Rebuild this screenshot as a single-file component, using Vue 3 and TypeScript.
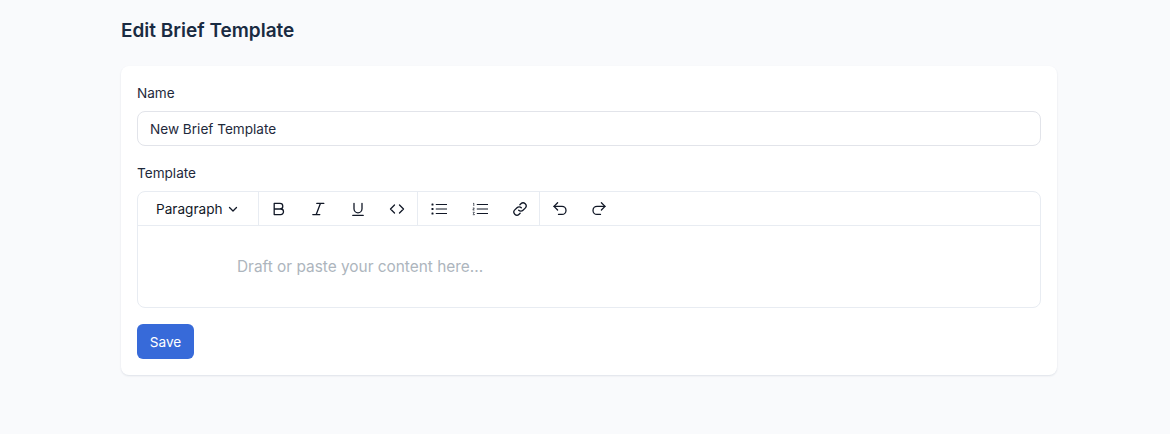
<script setup lang="ts">
const name = 'New Brief Template'
</script>

<template>
  <div class="page">
    <h1 class="title">Edit Brief Template</h1>
    <div class="card">
      <label class="label">Name</label>
      <div class="input">{{ name }}</div>
      <label class="label second">Template</label>
      <div class="editor">
        <div class="toolbar">
          <div class="group para">
            <span>Paragraph</span>
            <svg width="12" height="12" viewBox="0 0 12 12" fill="none" stroke="currentColor" stroke-width="1.3" stroke-linecap="round" stroke-linejoin="round"><path d="M2.5 4.500 6 8l3.500-3.500"/></svg>
          </div>
          <div class="group g1">
            <button class="tb"><svg width="16" height="16" viewBox="0 0 16 16" fill="none" stroke="currentColor" stroke-width="1.3" stroke-linecap="round" stroke-linejoin="round"><path d="M3.200 2.400h5.800a2.800 2.800 0 0 1 0 5.600H3.200zM3.200 8h6.500a2.800 2.800 0 0 1 0 5.600H3.200z"/></svg></button>
            <button class="tb"><svg width="16" height="16" viewBox="0 0 16 16" fill="none" stroke="currentColor" stroke-width="1.3" stroke-linecap="round" stroke-linejoin="round"><path d="M6.800 2.400H13.800M2.800 13.600H9.800M10.400 2.400 6.200 13.600"/></svg></button>
            <button class="tb"><svg width="16" height="16" viewBox="0 0 16 16" fill="none" stroke="currentColor" stroke-width="1.3" stroke-linecap="round" stroke-linejoin="round"><path d="M4 2.300V7.800a4 4 0 0 0 8 0V2.300M2.800 14.400H13.200"/></svg></button>
            <button class="tb"><svg width="16" height="16" viewBox="0 0 16 16" fill="none" stroke="currentColor" stroke-width="1.300" stroke-linecap="round" stroke-linejoin="round"><path d="M5.500 4 1.500 8l4 4M10.500 4l4 4-4 4"/></svg></button>
          </div>
          <div class="group g2">
            <button class="tb list"><svg width="16" height="16" viewBox="0 0 16 16" fill="none" stroke="currentColor" stroke-width="1.200" stroke-linecap="butt"><path d="M4.800 3.500H16M4.800 8H16M4.800 12.500H16"/><g fill="currentColor" stroke="none"><rect x="0.500" y="2.500" width="2" height="2" rx=".6"/><rect x="0.500" y="7" width="2" height="2" rx=".6"/><rect x="0.500" y="11.500" width="2" height="2" rx=".6"/></g></svg></button>
            <button class="tb"><svg width="16" height="16" viewBox="0 0 16 16" fill="none" stroke="currentColor" stroke-width="1.200" stroke-linecap="butt"><path d="M4.800 3.500H16M4.800 8H16M4.800 12.500H16"/><path stroke-width=".7" d="M1 2.700 1.800 2.200v2.800M.8 7h1.500L.8 9h1.700M.8 11.300h1.600L1.500 12.500 2.500 13.700H.8"/></svg></button>
            <button class="tb"><svg width="16" height="16" viewBox="0 0 16 16" fill="none" stroke="currentColor" stroke-width="1.300" stroke-linecap="round" stroke-linejoin="round"><path d="M6.700 9.300a3 3 0 0 0 4.300 0l2.200-2.200a3 3 0 0 0-4.300-4.300l-1 1"/><path d="M9.300 6.700a3 3 0 0 0-4.300 0L2.800 8.900a3 3 0 0 0 4.300 4.300l1-1"/></svg></button>
          </div>
          <div class="group g3">
            <button class="tb"><svg width="16" height="16" viewBox="0 0 16 16" fill="none" stroke="currentColor" stroke-width="1.300" stroke-linecap="round" stroke-linejoin="round"><path d="M5.600 1.800 2 5.400 5.600 9"/><path d="M2 5.400H10a4 4 0 0 1 0 8H6.500"/></svg></button>
            <button class="tb"><svg width="16" height="16" viewBox="0 0 16 16" fill="none" stroke="currentColor" stroke-width="1.300" stroke-linecap="round" stroke-linejoin="round"><path d="M10.400 1.800 14 5.400 10.400 9"/><path d="M14 5.400H6a4 4 0 0 0 0 8h3.500"/></svg></button>
          </div>
        </div>
        <div class="body"><span class="placeholder">Draft or paste your content here...</span></div>
      </div>
      <button class="save">Save</button>
    </div>
  </div>
</template>

<style>
html, body { margin: 0; background: #f9fafc; }
</style>

<style scoped>
.page {
  width: 936px;
  margin: 0 0 0 121px;
  padding: 19px 0 58px;
  font-family: Inter, "Liberation Sans", sans-serif;
  color: #1e293b;
}
.title {
  margin: 0 0 23px;
  font-size: 19px;
  line-height: 24px;
  font-weight: 600;
  color: #1a2b42;
}
.card {
  display: flex;
  flex-direction: column;
  align-items: stretch;
  background: #fff;
  border-radius: 8px;
  padding: 17px 16px 16px;
  box-shadow: 0 1px 2px rgba(30, 50, 90, 0.12);
}
.label {
  font-size: 13.6px;
  line-height: 20px;
  margin-bottom: 8px;
  color: #1e293b;
}
.label.second { margin-top: 17px; margin-bottom: 8px; }
.input {
  height: 33px;
  border: 1px solid #e2e4ea;
  border-radius: 8px;
  padding: 0 12px;
  font-size: 13.6px;
  line-height: 34px;
  color: #1e293b;
}
.editor {
  border: 1px solid #e8ecf2;
  border-radius: 8px;
}
.toolbar {
  display: flex;
  height: 33px;
  border-bottom: 1px solid #e8ecf2;
}
.group {
  display: flex;
  align-items: center;
  border-right: 1px solid #e8ecf2;
  padding: 0 0 0 1px;
  box-sizing: border-box;
}
.group:last-child { border-right: none; }
.para {
  width: 121px;
  padding: 0 0 0 18px;
  gap: 4px;
  font-size: 13.6px;
  color: #111827;
}
.tb {
  flex: none;
  width: 39.5px;
  height: 33px;
  padding: 0;
  border: none;
  background: none;
  color: #111827;
  display: flex;
  align-items: center;
  justify-content: center;
}
.g1 { width: 159px; padding-left: 0; }
.g2 { width: 122px; }
.g3 { padding-left: 0; }
.list { margin-right: 2px; }
.body {
  height: 81px;
  padding: 31px 0 0 99px;
  box-sizing: border-box;
}
.placeholder {
  font-size: 15.4px;
  line-height: 20px;
  color: #adb5bd;
  display: block;
}
.save {
  align-self: flex-start;
  margin-top: 16px;
  width: 57px;
  height: 35px;
  border: none;
  border-radius: 6px;
  background: #376ad9;
  color: #fff;
  font: 13.6px Inter, "Liberation Sans", sans-serif;
  padding: 0;
}
</style>
